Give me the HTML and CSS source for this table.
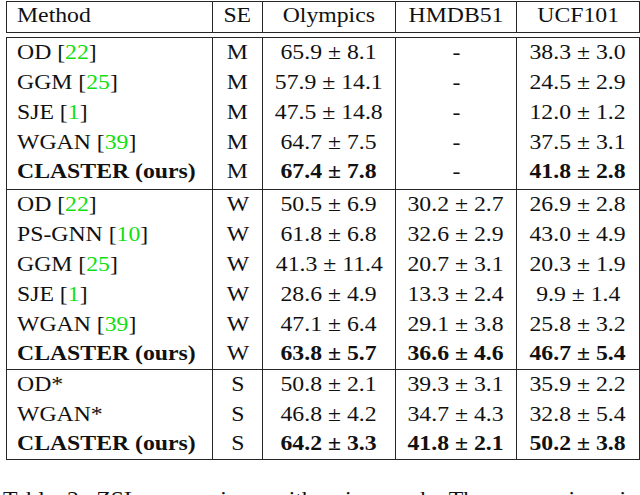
FILE: index.html
```html
<!DOCTYPE html>
<html>
<head>
<meta charset="utf-8">
<link rel="stylesheet" href="styles.css">
</head>
<body>
<div class="page">
  <table class="grid head">
    <colgroup><col class="c1"><col class="c2"><col class="c3"><col class="c4"><col class="c5"></colgroup>
    <tr>
      <th class="name"><span class="t">Method</span></th>
      <th><span class="t">SE</span></th>
      <th><span class="t">Olympics</span></th>
      <th><span class="t">HMDB51</span></th>
      <th><span class="t">UCF101</span></th>
    </tr>
  </table>
  <table class="grid body">
    <colgroup><col class="c1"><col class="c2"><col class="c3"><col class="c4"><col class="c5"></colgroup>
    <tbody class="sec first">
      <tr><td class="name"><span class="t">OD [<span class="cite">22</span>]</span></td><td><span class="t">M</span></td><td><span class="t">65.9 ± 8.1</span></td><td><span class="t">-</span></td><td><span class="t">38.3 ± 3.0</span></td></tr>
      <tr><td class="name"><span class="t">GGM [<span class="cite">25</span>]</span></td><td><span class="t">M</span></td><td><span class="t">57.9 ± 14.1</span></td><td><span class="t">-</span></td><td><span class="t">24.5 ± 2.9</span></td></tr>
      <tr><td class="name"><span class="t">SJE [<span class="cite">1</span>]</span></td><td><span class="t">M</span></td><td><span class="t">47.5 ± 14.8</span></td><td><span class="t">-</span></td><td><span class="t">12.0 ± 1.2</span></td></tr>
      <tr><td class="name"><span class="t">WGAN [<span class="cite">39</span>]</span></td><td><span class="t">M</span></td><td><span class="t">64.7 ± 7.5</span></td><td><span class="t">-</span></td><td><span class="t">37.5 ± 3.1</span></td></tr>
      <tr><td class="name"><span class="t b">CLASTER (ours)</span></td><td><span class="t">M</span></td><td><span class="t b">67.4 ± 7.8</span></td><td><span class="t">-</span></td><td><span class="t b">41.8 ± 2.8</span></td></tr>
    </tbody>
    <tbody class="sec">
      <tr><td class="name"><span class="t">OD [<span class="cite">22</span>]</span></td><td><span class="t">W</span></td><td><span class="t">50.5 ± 6.9</span></td><td><span class="t">30.2 ± 2.7</span></td><td><span class="t">26.9 ± 2.8</span></td></tr>
      <tr><td class="name"><span class="t">PS-GNN [<span class="cite">10</span>]</span></td><td><span class="t">W</span></td><td><span class="t">61.8 ± 6.8</span></td><td><span class="t">32.6 ± 2.9</span></td><td><span class="t">43.0 ± 4.9</span></td></tr>
      <tr><td class="name"><span class="t">GGM [<span class="cite">25</span>]</span></td><td><span class="t">W</span></td><td><span class="t">41.3 ± 11.4</span></td><td><span class="t">20.7 ± 3.1</span></td><td><span class="t">20.3 ± 1.9</span></td></tr>
      <tr><td class="name"><span class="t">SJE [<span class="cite">1</span>]</span></td><td><span class="t">W</span></td><td><span class="t">28.6 ± 4.9</span></td><td><span class="t">13.3 ± 2.4</span></td><td><span class="t">9.9 ± 1.4</span></td></tr>
      <tr><td class="name"><span class="t">WGAN [<span class="cite">39</span>]</span></td><td><span class="t">W</span></td><td><span class="t">47.1 ± 6.4</span></td><td><span class="t">29.1 ± 3.8</span></td><td><span class="t">25.8 ± 3.2</span></td></tr>
      <tr><td class="name"><span class="t b">CLASTER (ours)</span></td><td><span class="t">W</span></td><td><span class="t b">63.8 ± 5.7</span></td><td><span class="t b">36.6 ± 4.6</span></td><td><span class="t b">46.7 ± 5.4</span></td></tr>
    </tbody>
    <tbody class="sec">
      <tr><td class="name"><span class="t">OD*</span></td><td><span class="t">S</span></td><td><span class="t">50.8 ± 2.1</span></td><td><span class="t">39.3 ± 3.1</span></td><td><span class="t">35.9 ± 2.2</span></td></tr>
      <tr><td class="name"><span class="t">WGAN*</span></td><td><span class="t">S</span></td><td><span class="t">46.8 ± 4.2</span></td><td><span class="t">34.7 ± 4.3</span></td><td><span class="t">32.8 ± 5.4</span></td></tr>
      <tr><td class="name"><span class="t b">CLASTER (ours)</span></td><td><span class="t">S</span></td><td><span class="t b">64.2 ± 3.3</span></td><td><span class="t b">41.8 ± 2.1</span></td><td><span class="t b">50.2 ± 3.8</span></td></tr>
    </tbody>
  </table>
  <p class="caption"><span class="t">Table 2. ZSL comparison with prior work. The comparison is</span></p>
</div>
</body>
</html>
```

FILE: styles.css
```css
html, body {
  margin: 0;
  padding: 0;
  background: #ffffff;
}
body {
  width: 640px;
  height: 495px;
  overflow: hidden;
  font-family: "Liberation Serif", "Times New Roman", serif;
  font-size: 21px;
  color: #111111;
}
.page {
  padding-top: 1px;
  padding-left: 6px;
}
.grid {
  border-collapse: collapse;
  table-layout: fixed;
  width: 633px;
}
.grid td, .grid th {
  border-left: 1px solid #262626;
  border-right: 1px solid #262626;
  padding: 0 0 2px 0;
  text-align: center;
  font-weight: normal;
  white-space: nowrap;
  line-height: 24px;
  vertical-align: middle;
}
.grid th { padding-bottom: 4px; }
.c1 { width: 206px; }
.c2 { width: 50px; }
.c3 { width: 133px; }
.c4 { width: 121px; }
.c5 { width: 123px; }
.head {
  border: 1px solid #262626;
}
.head tr { height: 31px; }
.body {
  margin-top: 4px;
  border: 1px solid #262626;
}
.sec { border-top: 1px solid #262626; }
.sec tr { height: 30px; }
.first tr:last-child { height: 32px; }
.first tr:last-child td { padding-bottom: 4px; }
.grid .name {
  text-align: left;
  padding-left: 10px;
}
.t {
  display: inline-block;
  transform: scaleX(1.13);
  transform-origin: center;
}
.name .t { transform-origin: left center; }
.b { font-weight: bold; }
.cite { color: #10e010; }
.caption {
  margin: 27px 0 0 -3px;
  white-space: nowrap;
  line-height: 24px;
  word-spacing: 5px;
}
.caption .t { transform-origin: left center; }
```
